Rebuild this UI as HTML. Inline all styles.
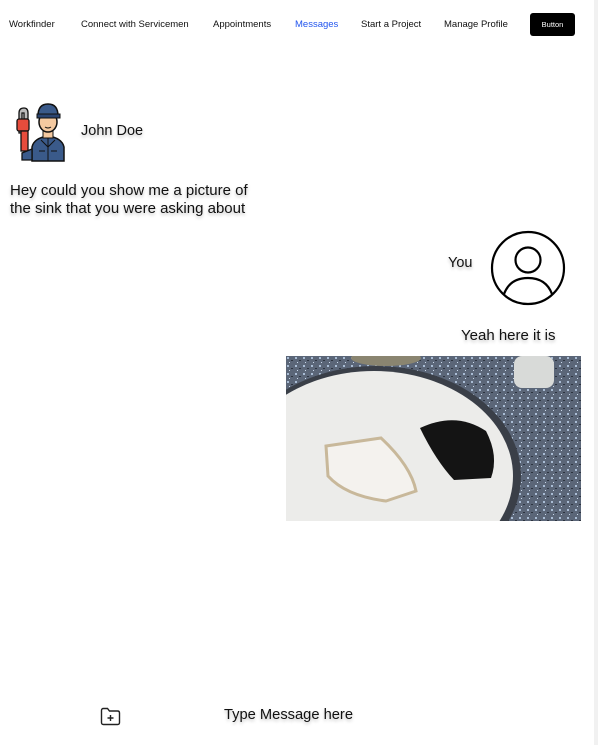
<!DOCTYPE html>
<html><head><meta charset="utf-8"><style>
body{margin:0;width:598px;height:745px;background:#fff;position:relative;overflow:hidden;font-family:"Liberation Sans",sans-serif;color:#111}
.a{position:absolute;white-space:nowrap}
.nav{font-size:9.5px;top:19px}
.sh{text-shadow:0 2px 3px rgba(0,0,0,.25)}
</style></head><body>
<div class="a nav" style="left:9px">Workfinder</div>
<div class="a nav" style="left:81px">Connect with Servicemen</div>
<div class="a nav" style="left:213px">Appointments</div>
<div class="a nav" style="left:295px;color:#2255ee">Messages</div>
<div class="a nav" style="left:361px">Start a Project</div>
<div class="a nav" style="left:444px">Manage Profile</div>
<div class="a" style="left:530px;top:13px;width:45px;height:23px;background:#000;border-radius:3px;color:#fff;font-size:7.5px;line-height:23px;text-align:center">Button</div>
<div class="a" style="left:594px;top:0;width:4px;height:745px;background:#f1f1f1"></div>

<svg class="a" style="left:14px;top:103px" width="52" height="60" viewBox="0 0 52 60">
<path d="M18 58 V44 Q20 35 34 33 Q48 35 50 44 V58Z" fill="#3a5a8a" stroke="#111" stroke-width="1.5"/>
<path d="M34 33 V58 M27 37 L34 44 L41 37 M25 48 H31 M37 48 H43" stroke="#111" stroke-width="1" fill="none"/>
<rect x="29" y="26" width="10" height="9" fill="#f4c9a0" stroke="#111" stroke-width="1"/>
<ellipse cx="34" cy="19" rx="9" ry="10" fill="#f4c9a0" stroke="#111" stroke-width="1.5"/>
<path d="M24 13 Q24 1 34 1 Q44 1 44 13Z" fill="#3a5a8a" stroke="#111" stroke-width="1.5"/>
<rect x="23" y="11" width="23" height="4" fill="#2a4470" stroke="#111" stroke-width="1"/>
<path d="M31 24 Q34 26 37 24" stroke="#111" stroke-width="1" fill="none"/>
<path d="M5 10 Q5 5 10 5 Q14 5 14 10 V16 H10 V10 H8 V30 H5Z" fill="#bbb" stroke="#111" stroke-width="1.3"/>
<rect x="3" y="16" width="12" height="12" rx="2" fill="#e74c3c" stroke="#111" stroke-width="1.3"/>
<rect x="7" y="28" width="7" height="20" fill="#e74c3c" stroke="#111" stroke-width="1.3"/>
<path d="M8 50 L8 57 L18 57 L18 46 Z" fill="#3a5a8a" stroke="#111" stroke-width="1.3"/>
</svg>
<div class="a sh" style="left:81px;top:123px;font-size:14.5px">John Doe</div>
<div class="a sh" style="left:10px;top:182px;font-size:15px;line-height:18px">Hey could you show me a picture of<br>the sink that you were asking about</div>

<div class="a sh" style="left:448px;top:255px;font-size:14.5px">You</div>
<svg class="a" style="left:490px;top:230px" width="76" height="76" viewBox="0 0 76 76" fill="none" stroke="#000" stroke-width="2.2">
<circle cx="38" cy="38" r="36"/><circle cx="38" cy="30" r="12.5"/><path d="M14 64 Q20 48 38 48 Q56 48 62 64"/>
</svg>
<div class="a sh" style="left:461px;top:327px;font-size:15px">Yeah here it is</div>

<svg class="a" style="left:286px;top:356px" width="295" height="165" viewBox="0 0 295 165">
<defs><pattern id="g" width="8" height="8" patternUnits="userSpaceOnUse"><rect width="8" height="8" fill="#5b6678"/><rect x="1" y="1" width="2" height="2" fill="#a9bcd4"/><rect x="5" y="4" width="2" height="1" fill="#2d3440"/><rect x="3" y="6" width="1" height="1" fill="#c8d6e8"/></pattern></defs>
<rect width="295" height="165" fill="url(#g)"/>
<ellipse cx="90" cy="120" rx="145" ry="110" fill="#3a3f48"/>
<ellipse cx="88" cy="120" rx="139" ry="105" fill="#ececea"/>
<path d="M134 72 Q170 55 200 75 Q213 100 205 122 L168 124 Q150 105 134 72Z" fill="#141414"/>
<path d="M40 90 L95 82 Q125 110 130 135 L100 145 Q60 140 42 120Z" fill="#f4f2ee" stroke="#c8b89a" stroke-width="3"/>
<rect x="228" y="0" width="40" height="32" rx="8" fill="#d8dad8"/>
<ellipse cx="100" cy="2" rx="35" ry="8" fill="#8a8570"/>
</svg>

<svg class="a" style="left:100px;top:707px" width="21" height="19" viewBox="0 0 21 19" fill="none" stroke="#222" stroke-width="1.4">
<path d="M1.5 3.5 Q1.5 1.5 3.5 1.5 H7.5 L9.5 4 H17.5 Q19.5 4 19.5 6 V15.5 Q19.5 17.5 17.5 17.5 H3.5 Q1.5 17.5 1.5 15.5Z"/><path d="M10.5 8 V14 M7.5 11 H13.5"/>
</svg>
<div class="a sh" style="left:224px;top:707px;font-size:14.7px">Type Message here</div>
</body></html>
